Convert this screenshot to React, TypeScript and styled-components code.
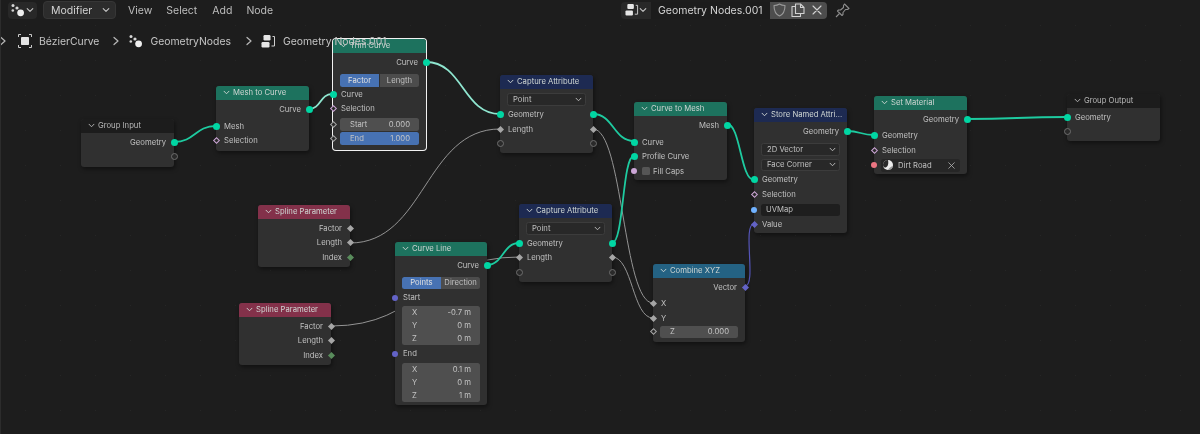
import React from "react";
import styled, { createGlobalStyle, css } from "styled-components";

const Global = createGlobalStyle`
  html, body { margin: 0; padding: 0; background: #1d1d1d; }
  body { font-family: Inter, "Liberation Sans", sans-serif; }
`;

const Editor = styled.div`
  position: relative;
  width: 1200px;
  height: 434px;
  overflow: hidden;
  background-color: #1d1d1d;
  border-left: 1px solid #2c2c2c;
  box-sizing: border-box;
  color: #c8c8c8;
  filter: blur(0.3px);
`;

const TopBar = styled.div`
  position: relative;
  z-index: 3;
  display: flex;
  align-items: center;
  height: 18px;
  padding: 1px 0 0 7px;
  font-size: 10.5px;
`;
const MenuGroup = styled.div`
  display: flex;
  align-items: center;
  width: 613px;
  flex: none;
`;
const IconDrop = styled.div`
  width: 29px;
  height: 17px;
  border-radius: 4px;
  background: #282828;
  display: flex;
  align-items: center;
  justify-content: center;
  gap: 1px;
  box-sizing: border-box;
`;
const ModeDrop = styled.div`
  margin-left: 6px;
  width: 73px;
  height: 18px;
  box-sizing: border-box;
  border-radius: 4px;
  background: #2c2c2c;
  border: 1px solid #363636;
  display: flex;
  align-items: center;
  justify-content: space-between;
  padding: 0 5px 0 7px;
  color: #d2d2d2;
`;
const Menu = styled.span<{ $gap: number }>`
  margin-left: ${(p) => p.$gap}px;
  color: #bdbdbd;
`;
const DataBlock = styled.div`
  display: flex;
  align-items: center;
  height: 17px;
`;
const DataIcon = styled.div`
  width: 30px;
  height: 17px;
  background: #282828;
  border-radius: 4px 0 0 4px;
  display: flex;
  align-items: center;
  justify-content: center;
`;
const NameField = styled.div`
  width: 119px;
  height: 17px;
  background: #1c1c1c;
  display: flex;
  align-items: center;
  padding-left: 7px;
  box-sizing: border-box;
  font-size: 10.5px;
  color: #d4d4d4;
  white-space: nowrap;
`;
const BlockButton = styled.div<{ $end?: boolean }>`
  width: 18.5px;
  height: 17px;
  margin-right: 0.5px;
  background: #4d4d4d;
  display: flex;
  align-items: center;
  justify-content: center;
  ${(p) => p.$end && css`border-radius: 0 4px 4px 0;`}
`;
const PinBox = styled.div`
  margin-left: 8px;
  display: flex;
`;

const Breadcrumb = styled.div`
  position: relative;
  z-index: 3;
  display: flex;
  align-items: center;
  height: 16px;
  margin-top: 14px;
  font-size: 10.4px;
  color: #c4c4c4;
`;
const CrumbArrow = styled.span<{ $before: number; $after: number }>`
  display: inline-flex;
  flex: none;
  margin-left: ${(p) => p.$before}px;
  margin-right: ${(p) => p.$after}px;
`;
const CrumbIcon = styled.span`
  display: inline-flex;
  flex: none;
`;
const CrumbText = styled.span`
  margin-left: 7px;
  white-space: nowrap;
`;

const NodeCanvas = styled.div`
  position: absolute;
  inset: 0 0 0 -1px;
  background-image: radial-gradient(circle, #262626 0.7px, transparent 1px);
  background-size: 35px 35px;
  background-position: 8px 8px;
`;
const Wires = styled.svg`
  position: absolute;
  left: 0;
  top: 0;
`;

const Tones: Record<string, string> = {
  geo: "#1d725e",
  attr: "#1d2a52",
  spline: "#83314a",
  vector: "#246283",
  group: "#1c1c1c",
};

const NodeBox = styled.div<{ $x: number; $y: number; $w: number; $h: number; $selected?: boolean }>`
  position: absolute;
  left: ${(p) => p.$x}px;
  top: ${(p) => p.$y}px;
  width: ${(p) => p.$w}px;
  height: ${(p) => p.$h}px;
  background: #303030;
  border-radius: 3px;
  box-shadow: ${(p) => (p.$selected ? "0 0 0 1px #f2f2f2" : "1px 2px 4px rgba(0,0,0,.45)")};
  font-size: 7.7px;
  color: #c0c0c0;
`;
const NodeHeader = styled.div<{ $tone: string }>`
  height: 13.5px;
  background: ${(p) => Tones[p.$tone]};
  border-radius: 3px 3px 0 0;
  display: flex;
  align-items: center;
  padding-left: 7px;
  gap: 3px;
  color: ${(p) => (p.$tone === "group" ? "#b8b8b8" : "#cfd6d3")};
  white-space: nowrap;
`;
const NodeBody = styled.div`
  padding-top: 2.5px;
`;
const Gap = styled.div<{ $h: number }>`
  height: ${(p) => p.$h}px;
`;
const RowBox = styled.div<{ $out?: boolean }>`
  position: relative;
  height: 14.5px;
  display: flex;
  align-items: center;
  justify-content: ${(p) => (p.$out ? "flex-end" : "flex-start")};
  padding: 0 8px;
  white-space: nowrap;
`;
const Inset = styled.div`
  position: relative;
  margin: 0 7px;
`;
const Dot = styled.i<{ $color: string; $out?: boolean; $d?: number }>`
  position: absolute;
  top: 50%;
  ${(p) => (p.$out ? "right" : "left")}: ${(p) => -(p.$d ?? 7) / 2}px;
  width: ${(p) => p.$d ?? 7}px;
  height: ${(p) => p.$d ?? 7}px;
  margin-top: ${(p) => -(p.$d ?? 7) / 2}px;
  border-radius: 50%;
  background: ${(p) => p.$color};
  z-index: 1;
`;
const Ring = styled(Dot)`
  background: #2a2a2a;
  box-sizing: border-box;
  border: 1px solid #6e6e6e;
`;
const Diamond = styled.i<{ $color: string; $out?: boolean; $hollow?: boolean; $edge?: number }>`
  position: absolute;
  top: 50%;
  ${(p) => (p.$out ? "right" : "left")}: ${(p) => (p.$edge ?? 0) - 2.5}px;
  width: 5px;
  height: 5px;
  margin-top: -2.5px;
  box-sizing: border-box;
  transform: rotate(45deg);
  z-index: 1;
  background: ${(p) => (p.$hollow ? "#2a2a2a" : p.$color)};
  border: ${(p) => (p.$hollow ? `1.2px solid ${p.$color}` : "none")};
`;

type Kind = "geo" | "float" | "floatHollow" | "int" | "vector" | "vecRound" | "bool" | "boolRound" | "string" | "material" | "empty";

const Socket = ({ kind, out, edge }: { kind: Kind; out?: boolean; edge?: number }) => {
  switch (kind) {
    case "geo":
      return <Dot $color="#00d6a3" $out={out} />;
    case "float":
      return <Diamond $color="#a6a6a6" $out={out} $edge={edge} />;
    case "floatHollow":
      return <Diamond $color="#a6a6a6" $out={out} $hollow $edge={edge} />;
    case "int":
      return <Diamond $color="#598c5c" $out={out} $edge={edge} />;
    case "vector":
      return <Diamond $color="#6363c7" $out={out} $edge={edge} />;
    case "vecRound":
      return <Dot $color="#6363c7" $out={out} $d={6} />;
    case "bool":
      return <Diamond $color="#cca6d6" $out={out} $hollow $edge={edge} />;
    case "boolRound":
      return <Dot $color="#cca6d6" $out={out} $d={6} />;
    case "string":
      return <Dot $color="#70b2ff" $out={out} $d={6} />;
    case "material":
      return <Dot $color="#eb7582" $out={out} $d={6} />;
    default:
      return <Ring $color="#2a2a2a" $out={out} />;
  }
};

const Row = ({ kind, out, children }: { kind: Kind; out?: boolean; children?: React.ReactNode }) => (
  <RowBox $out={out}>
    <Socket kind={kind} out={out} />
    {children}
  </RowBox>
);

const Toggle = styled.div`
  display: flex;
  height: 12.5px;
  margin: 0 7px;
  border-radius: 2.5px;
  overflow: hidden;
  gap: 0.5px;
`;
const ToggleCell = styled.div<{ $on?: boolean }>`
  flex: 1;
  display: flex;
  align-items: center;
  justify-content: center;
  background: ${(p) => (p.$on ? "#4772b3" : "#4c4c4c")};
  color: ${(p) => (p.$on ? "#e0e0e0" : "#c0c0c0")};
`;
const Field = styled.div<{ $on?: boolean; $top?: boolean; $mid?: boolean; $bottom?: boolean }>`
  height: 12.5px;
  display: flex;
  align-items: center;
  justify-content: space-between;
  padding: 0 9px 0 10px;
  background: ${(p) => (p.$on ? "#4772b3" : "#4f4f4f")};
  border-radius: ${(p) => (p.$top ? "2.5px 2.5px 0 0" : p.$mid ? "0" : p.$bottom ? "0 0 2.5px 2.5px" : "2.5px")};
  margin-bottom: ${(p) => (p.$top || p.$mid ? 0.5 : 0)}px;
  color: #c4c4c4;
`;
const Drop = styled.div`
  height: 12.5px;
  margin: 0 7px;
  box-sizing: border-box;
  display: flex;
  align-items: center;
  justify-content: space-between;
  padding: 0 3px 0 5px;
  background: #282828;
  border: 0.5px solid #3c3c3c;
  border-radius: 2.5px;
`;
const TextSlot = styled.div`
  flex: 1;
  height: 12.5px;
  margin-left: -1px;
  margin-right: -1px;
  display: flex;
  align-items: center;
  padding-left: 5px;
  background: #1e1e1e;
  border-radius: 2.5px;
`;
const MaterialSlot = styled(TextSlot)`
  justify-content: space-between;
  padding: 0 5px 0 2px;
  gap: 5px;
  background: #262626;
`;
const MaterialName = styled.span`
  flex: 1;
`;
const CheckMark = styled.span`
  width: 8px;
  height: 8px;
  margin-right: 3px;
  border-radius: 1.5px;
  background: #555;
  flex: none;
`;

const Chevron = ({ size = 8, color = "currentColor" }: { size?: number; color?: string }) => (
  <svg width={size} height={size} viewBox="0 0 10 10" fill="none" stroke={color} strokeWidth="1.3" strokeLinecap="round" strokeLinejoin="round">
    <path d="M1.5 3.2 5 6.8 8.5 3.2" />
  </svg>
);

const Node = ({ title, tone, x, y, w, h, selected, children }: {
  title: string; tone: string; x: number; y: number; w: number; h: number; selected?: boolean; children: React.ReactNode;
}) => (
  <NodeBox $x={x} $y={y} $w={w} $h={h} $selected={selected}>
    <NodeHeader $tone={tone}>
      <Chevron size={7} />
      <span>{title}</span>
    </NodeHeader>
    <NodeBody>{children}</NodeBody>
  </NodeBox>
);

const GeoIcon = ({ size = 14 }: { size?: number }) => (
  <svg width={size} height={size} viewBox="0 0 14 14" fill="#d6d6d6">
    <circle cx="2" cy="2.5" r="1.5" />
    <circle cx="6" cy="5" r="1.6" />
    <circle cx="1.8" cy="7.5" r="1.3" />
    <circle cx="9.6" cy="9.8" r="3.4" fill="#eeeeee" />
  </svg>
);
const ObjectIcon = () => (
  <svg width="14" height="14" viewBox="0 0 14 14" fill="none" stroke="#c8c8c8" strokeWidth="1">
    <path d="M.5 3V.5H3M11 .5h2.500V3M13.500 11v2.500H11M3 13.500H.5V11" />
    <rect x="3" y="3" width="8" height="8" rx="0.8" fill="#e4e4e4" stroke="none" />
  </svg>
);
const TreeIcon = ({ size = 15 }: { size?: number }) => (
  <svg width={size} height={size} viewBox="0 0 15 15" fill="none">
    <rect x="2.500" y="1" width="7" height="5.500" rx="1.200" fill="#e6e6e6" />
    <rect x=".5" y="8" width="8" height="5.500" rx="1.200" fill="#e6e6e6" />
    <path d="M11.500 2.500H13.500V12H10.500" stroke="#cfcfcf" strokeWidth="1" />
  </svg>
);
const Arrow = () => (
  <svg width="8" height="10" viewBox="0 0 8 10" fill="none" stroke="#b8b8b8" strokeWidth="1.200" strokeLinecap="round" strokeLinejoin="round">
    <path d="M2 1.500 6 5 2 8.500" />
  </svg>
);
const ShieldGlyph = () => (
  <svg width="13" height="14" viewBox="0 0 13 14" fill="none" stroke="#9a9a9a" strokeWidth="1.100" strokeLinejoin="round">
    <path d="M1 2.500C3 2.500 5 2 6.500 1 8 2 10 2.500 12 2.500 12 8 10 11.500 6.500 13 3 11.500 1 8 1 2.500Z" />
  </svg>
);
const CopyGlyph = () => (
  <svg width="14" height="14" viewBox="0 0 14 14" fill="none" stroke="#d2d2d2" strokeWidth="1.100" strokeLinejoin="round">
    <path d="M4.500 10.500V1H9.500L13 4.500V10.500Z" />
    <path d="M9.500 1V4.500H13" />
    <path d="M4.500 3.500H1V13.500H9.500V10.500" />
  </svg>
);
const CloseGlyph = ({ size = 10, color = "#d2d2d2" }: { size?: number; color?: string }) => (
  <svg width={size} height={size} viewBox="0 0 10 10" stroke={color} strokeWidth="1.100" strokeLinecap="round">
    <path d="M1 1 9 9M9 1 1 9" />
  </svg>
);
const PinGlyph = () => (
  <svg width="15" height="15" viewBox="0 0 15 15" fill="none" stroke="#8d8d8d" strokeWidth="1.100" strokeLinejoin="round">
    <path d="M9.500 1 14 5.500 12.500 6.500 10.500 6.500 8 9.500 8 11.500 7 12.500 2.500 8 3.500 7 5.500 7 8.500 4.500 8.500 2.500Z" />
    <path d="M4.500 10.500 1 14" />
  </svg>
);
const MaterialBall = () => (
  <svg width="10" height="10" viewBox="0 0 10 10">
    <circle cx="5" cy="5" r="5" fill="#ececec" />
    <path d="M5 0A5 5 0 0 0 0 5C0 6.500 1 7.500 2 7.500 4 7.500 6 5 5 0Z" fill="#2a2a2a" />
    <path d="M10 6A5 5 0 0 1 5 10C6 8 8 6.500 10 6Z" fill="#9a9a9a" />
  </svg>
);

const curve = (x1: number, y1: number, x2: number, y2: number) => {
  const d = Math.max(Math.abs(x2 - x1) * 0.5, 12);
  return `M${x1} ${y1}C${x1 + d} ${y1} ${x2 - d} ${y2} ${x2} ${y2}`;
};
const geoLinks = [
  [174, 142, 216, 126],
  [593, 114, 634, 141],
  [727, 124, 754, 180],
  [847, 131, 874, 135],
  [967, 119, 1067, 117],
  [487, 265, 519, 243],
  [612, 243, 634, 156],
];
const selectedLinks = [
  [309, 109, 332, 94],
  [426, 62, 500, 114],
];
const greyLinks = [
  [350, 243, 500, 129],
  [331, 326, 519, 257],
  [593, 129, 653, 303],
  [612, 257, 653, 318],
];

export default function App() {
  return (
    <Editor>
      <Global />
      <NodeCanvas>
        <Wires width="1200" height="434" fill="none">
          {greyLinks.map((l, i) => (
            <path key={i} d={curve(l[0], l[1], l[2], l[3])} stroke="#949494" strokeWidth="1" />
          ))}
          <path d={curve(745, 286, 754, 224)} stroke="#5555b8" strokeWidth="1.200" />
          {geoLinks.map((l, i) => (
            <path key={i} d={curve(l[0], l[1], l[2], l[3])} stroke="#1ecba0" strokeWidth="1.800" />
          ))}
          {selectedLinks.map((l, i) => (
            <path key={i} d={curve(l[0], l[1], l[2], l[3])} stroke="#8fe6d0" strokeWidth="1.800" />
          ))}
        </Wires>

        <Node title="Group Input" tone="group" x={81} y={119} w={93} h={48}>
          <Row kind="geo" out>Geometry</Row>
          <Row kind="empty" out />
        </Node>

        <Node title="Mesh to Curve" tone="geo" x={216} y={86} w={93} h={64.5}>
          <Row kind="geo" out>Curve</Row>
          <Gap $h={2.5} />
          <Row kind="geo">Mesh</Row>
          <Row kind="bool">Selection</Row>
        </Node>

        <Node title="Trim Curve" tone="geo" x={333} y={39} w={93} h={111} selected>
          <Row kind="geo" out>Curve</Row>
          <Gap $h={4.500} />
          <Toggle>
            <ToggleCell $on>Factor</ToggleCell>
            <ToggleCell>Length</ToggleCell>
          </Toggle>
          <Gap $h={0.500} />
          <Row kind="geo">Curve</Row>
          <Row kind="bool">Selection</Row>
          <Gap $h={2} />
          <Inset>
            <Socket kind="floatHollow" edge={-7} />
            <Field>Start<span>0.000</span></Field>
          </Inset>
          <Gap $h={1.500} />
          <Inset>
            <Socket kind="floatHollow" edge={-7} />
            <Field $on>End<span>1.000</span></Field>
          </Inset>
        </Node>

        <Node title="Capture Attribute" tone="attr" x={500} y={75} w={93} h={78}>
          <Gap $h={2} />
          <Drop>Point<Chevron size={7} /></Drop>
          <Gap $h={2} />
          <RowBox>
            <Socket kind="geo" />
            Geometry
            <Socket kind="geo" out />
          </RowBox>
          <RowBox>
            <Socket kind="float" />
            Length
            <Socket kind="float" out />
          </RowBox>
          <RowBox>
            <Socket kind="empty" />
            <Socket kind="empty" out />
          </RowBox>
        </Node>

        <Node title="Curve to Mesh" tone="geo" x={634} y={102} w={93} h={78}>
          <Row kind="geo" out>Mesh</Row>
          <Gap $h={2.500} />
          <Row kind="geo">Curve</Row>
          <Row kind="geo">Profile Curve</Row>
          <Row kind="boolRound"><CheckMark />Fill Caps</Row>
        </Node>

        <Node title="Store Named Attri..." tone="attr" x={754} y={108} w={93} h={125}>
          <Row kind="geo" out>Geometry</Row>
          <Gap $h={4.500} />
          <Drop>2D Vector<Chevron size={7} /></Drop>
          <Gap $h={3} />
          <Drop>Face Corner<Chevron size={7} /></Drop>
          <Gap $h={1.500} />
          <Row kind="geo">Geometry</Row>
          <Row kind="bool">Selection</Row>
          <Gap $h={1} />
          <Row kind="string"><TextSlot>UVMap</TextSlot></Row>
          <Row kind="vector">Value</Row>
        </Node>

        <Node title="Set Material" tone="geo" x={874} y={96} w={93} h={78}>
          <Row kind="geo" out>Geometry</Row>
          <Gap $h={2} />
          <Row kind="geo">Geometry</Row>
          <Row kind="bool">Selection</Row>
          <Gap $h={0.500} />
          <Row kind="material">
            <MaterialSlot>
              <MaterialBall />
              <MaterialName>Dirt Road</MaterialName>
              <CloseGlyph size={7} color="#b8b8b8" />
            </MaterialSlot>
          </Row>
        </Node>

        <Node title="Group Output" tone="group" x={1067} y={94} w={93} h={47}>
          <Row kind="geo">Geometry</Row>
          <Row kind="empty" />
        </Node>

        <Node title="Spline Parameter" tone="spline" x={258} y={205} w={92} h={62}>
          <Row kind="float" out>Factor</Row>
          <Row kind="float" out>Length</Row>
          <Row kind="int" out>Index</Row>
        </Node>

        <Node title="Spline Parameter" tone="spline" x={239} y={303} w={92} h={62}>
          <Row kind="float" out>Factor</Row>
          <Row kind="float" out>Length</Row>
          <Row kind="int" out>Index</Row>
        </Node>

        <Node title="Curve Line" tone="geo" x={395} y={242} w={92} h={163}>
          <Row kind="geo" out>Curve</Row>
          <Gap $h={4} />
          <Toggle>
            <ToggleCell $on>Points</ToggleCell>
            <ToggleCell>Direction</ToggleCell>
          </Toggle>
          <Gap $h={1.500} />
          <Row kind="vecRound">Start</Row>
          <Gap $h={1} />
          <Inset>
            <Field $top>X<span>-0.7 m</span></Field>
            <Field $mid>Y<span>0 m</span></Field>
            <Field $bottom>Z<span>0 m</span></Field>
          </Inset>
          <Gap $h={2} />
          <Row kind="vecRound">End</Row>
          <Gap $h={2} />
          <Inset>
            <Field $top>X<span>0.1 m</span></Field>
            <Field $mid>Y<span>0 m</span></Field>
            <Field $bottom>Z<span>1 m</span></Field>
          </Inset>
        </Node>

        <Node title="Capture Attribute" tone="attr" x={519} y={204} w={93} h={78}>
          <Gap $h={2} />
          <Drop>Point<Chevron size={7} /></Drop>
          <Gap $h={1.500} />
          <RowBox>
            <Socket kind="geo" />
            Geometry
            <Socket kind="geo" out />
          </RowBox>
          <RowBox>
            <Socket kind="float" />
            Length
            <Socket kind="float" out />
          </RowBox>
          <RowBox>
            <Socket kind="empty" />
            <Socket kind="empty" out />
          </RowBox>
        </Node>

        <Node title="Combine XYZ" tone="vector" x={653} y={264} w={92} h={78}>
          <Row kind="vector" out>Vector</Row>
          <Gap $h={2} />
          <Row kind="float">X</Row>
          <Row kind="float">Y</Row>
          <Inset>
            <Socket kind="floatHollow" edge={-7} />
            <Field>Z<span>0.000</span></Field>
          </Inset>
        </Node>
      </NodeCanvas>

      <TopBar>
        <MenuGroup>
          <IconDrop>
            <GeoIcon />
            <Chevron size={8} color="#c8c8c8" />
          </IconDrop>
          <ModeDrop>
            Modifier
            <Chevron size={8} color="#c8c8c8" />
          </ModeDrop>
          <Menu $gap={12}>View</Menu>
          <Menu $gap={14}>Select</Menu>
          <Menu $gap={15}>Add</Menu>
          <Menu $gap={14}>Node</Menu>
        </MenuGroup>
        <DataBlock>
          <DataIcon>
            <TreeIcon size={14} />
            <Chevron size={8} color="#c8c8c8" />
          </DataIcon>
          <NameField>Geometry Nodes.001</NameField>
          <BlockButton><ShieldGlyph /></BlockButton>
          <BlockButton><CopyGlyph /></BlockButton>
          <BlockButton $end><CloseGlyph /></BlockButton>
          <PinBox><PinGlyph /></PinBox>
        </DataBlock>
      </TopBar>

      <Breadcrumb>
        <CrumbArrow $before={-2} $after={11}><Arrow /></CrumbArrow>
        <CrumbIcon><ObjectIcon /></CrumbIcon>
        <CrumbText>BézierCurve</CrumbText>
        <CrumbArrow $before={13} $after={9}><Arrow /></CrumbArrow>
        <CrumbIcon><GeoIcon /></CrumbIcon>
        <CrumbText>GeometryNodes</CrumbText>
        <CrumbArrow $before={14} $after={8}><Arrow /></CrumbArrow>
        <CrumbIcon><TreeIcon /></CrumbIcon>
        <CrumbText>Geometry Nodes.001</CrumbText>
      </Breadcrumb>
    </Editor>
  );
}
